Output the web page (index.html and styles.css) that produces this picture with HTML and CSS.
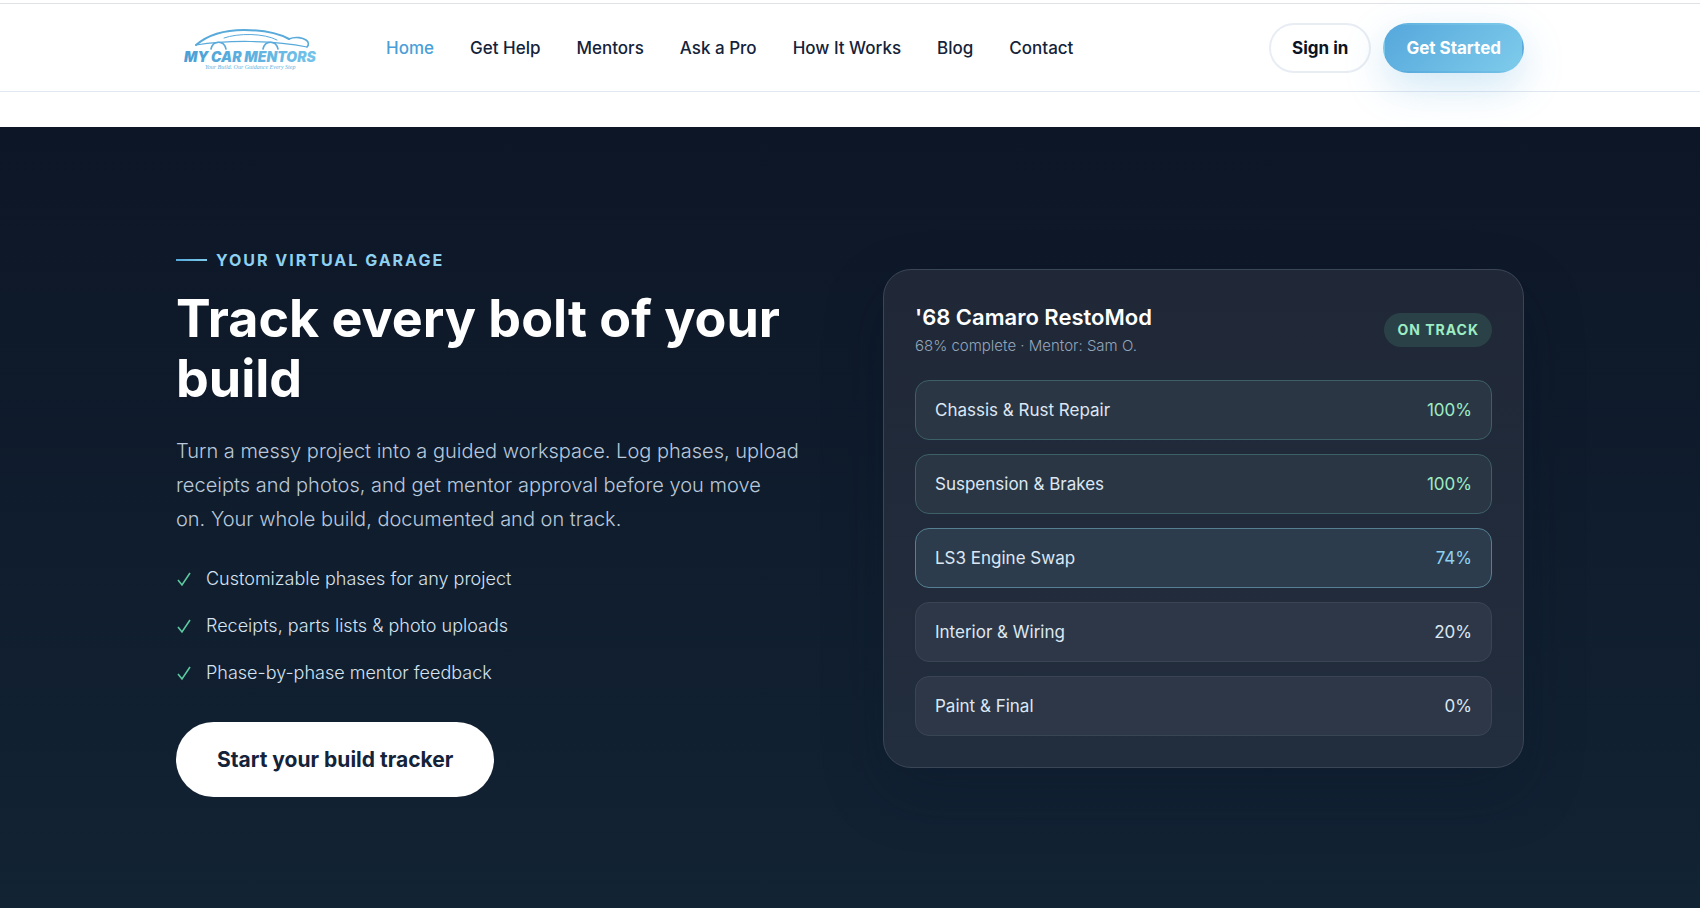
FILE: index.html
```html
<!DOCTYPE html>
<html lang="en">
<head>
    <meta charset="UTF-8">
    <meta name="viewport" content="width=device-width, initial-scale=1.0">
    <title>My Car Mentors</title>
    <link rel="stylesheet" href="styles.css">
</head>
<body>
    <header class="site-header">
        <div class="container header-inner">
            <a href="#" class="logo" aria-label="My Car Mentors">
                <svg width="152" height="56" viewBox="0 0 152 56">
                    <defs>
                        <linearGradient id="logoBlue" x1="0" y1="0" x2="1" y2="0">
                            <stop offset="0" stop-color="#4a9fd4"/>
                            <stop offset="1" stop-color="#74c3ea"/>
                        </linearGradient>
                    </defs>
                    <g fill="none" stroke="#58aadb" stroke-linecap="round" stroke-linejoin="round">
                        <path stroke-width="2" d="M20 25C34 13 52 10 68 10C86 10 102 13 113 19"/>
                        <path stroke-width="1.6" d="M113 19C120 16 127 18 130 20C133 22 133 25 131 27"/>
                        <path stroke-width="1.2" d="M20 25C50 20 98 20 131 27"/>
                        <path stroke-width="1" d="M48 18C62 13 88 13 101 20"/>
                        <path stroke-width="1.6" d="M35 29C37 20 48 20 50 29"/>
                        <path stroke-width="1.6" d="M87 29C89 20 100 20 102 29"/>
                    </g>
                    <text class="logo-name" x="8" y="42">MY CAR MENTORS</text>
                    <text class="logo-tag" x="29" y="49">Your Build. Our Guidance Every Step</text>
                </svg>
            </a>
            <nav class="main-nav">
                <a href="#" class="active">Home</a>
                <a href="#">Get Help</a>
                <a href="#">Mentors</a>
                <a href="#">Ask a Pro</a>
                <a href="#">How It Works</a>
                <a href="#">Blog</a>
                <a href="#">Contact</a>
            </nav>
            <div class="header-actions">
                <button type="button" class="btn btn-outline">Sign in</button>
                <button type="button" class="btn btn-primary">Get Started</button>
            </div>
        </div>
    </header>

    <section class="garage">
        <div class="container garage-grid">
            <div class="garage-copy">
                <p class="eyebrow">YOUR VIRTUAL GARAGE</p>
                <h1>Track every bolt of your build</h1>
                <p class="lead">Turn a messy project into a guided workspace. Log phases, upload receipts and photos, and get mentor approval before you move<br>on. Your whole build, documented and on track.</p>
                <ul class="checks">
                    <li><svg width="16" height="16" viewBox="0 0 16 16"><path d="M2 9l4 5L14 2"/></svg>Customizable phases for any project</li>
                    <li><svg width="16" height="16" viewBox="0 0 16 16"><path d="M2 9l4 5L14 2"/></svg>Receipts, parts lists &amp; photo uploads</li>
                    <li><svg width="16" height="16" viewBox="0 0 16 16"><path d="M2 9l4 5L14 2"/></svg>Phase-by-phase mentor feedback</li>
                </ul>
                <button type="button" class="btn-large">Start your build tracker</button>
            </div>

            <div class="tracker">
                <div class="tracker-head">
                    <div>
                        <h2>'68 Camaro RestoMod</h2>
                        <p>68% complete · Mentor: Sam O.</p>
                    </div>
                    <span class="badge">ON TRACK</span>
                </div>
                <ul class="phases">
                    <li class="done"><span>Chassis &amp; Rust Repair</span><span class="pct">100%</span></li>
                    <li class="done"><span>Suspension &amp; Brakes</span><span class="pct">100%</span></li>
                    <li class="current"><span>LS3 Engine Swap</span><span class="pct">74%</span></li>
                    <li><span>Interior &amp; Wiring</span><span class="pct">20%</span></li>
                    <li><span>Paint &amp; Final</span><span class="pct">0%</span></li>
                </ul>
            </div>
        </div>
    </section>
</body>
</html>
```

FILE: styles.css
```css
* {
    box-sizing: border-box;
}
body {
    margin: 0;
    padding-top: 3px;
    background: #fff;
    color: #0f1c2e;
    font-family: Inter, "Liberation Sans", sans-serif;
}
h1, h2, p, ul {
    margin: 0;
    padding: 0;
}
ul {
    list-style: none;
}
button {
    font-family: inherit;
    cursor: pointer;
}
.container {
    max-width: 1348px;
    margin: 0 auto;
}

/* Header */
.site-header {
    border-top: 1px solid #dfe3e8;
    border-bottom: 1px solid #e2e8f0;
}
.header-inner {
    display: flex;
    align-items: center;
    height: 87px;
}
.logo {
    display: flex;
    margin-right: 58px;
}
.logo-name {
    font: italic 900 14px Inter, sans-serif;
    fill: url(#logoBlue);
}
.logo-tag {
    font: italic 6px "Liberation Serif", serif;
    fill: #62b2e0;
}
.main-nav {
    display: flex;
    gap: 36px;
}
.main-nav a {
    color: #14233a;
    font-size: 17px;
    font-weight: 500;
    text-decoration: none;
}
.main-nav a.active {
    color: #4a9fd8;
}
.header-actions {
    display: flex;
    gap: 12px;
    margin-left: auto;
}
.btn {
    height: 50px;
    padding: 0 21px;
    border: 2px solid transparent;
    border-radius: 25px;
    font-size: 17px;
    font-weight: 700;
}
.btn-outline {
    border-color: #e8edf3;
    background: #fff;
    color: #0b1424;
}
.btn-primary {
    background: linear-gradient(135deg, #56a8dc, #7ecbeb);
    color: #fff;
    box-shadow: 0 14px 40px rgba(86, 168, 220, 0.28);
}

/* Virtual garage */
.garage {
    margin-top: 35px;
    padding: 112px 0 111px;
    background: linear-gradient(180deg, #0d1626, #122334);
}
.garage-grid {
    display: grid;
    grid-template-columns: 1fr 1fr;
    gap: 66px;
    align-items: center;
}
.garage-copy {
    padding-top: 7px;
}
.eyebrow {
    display: flex;
    align-items: center;
    gap: 9px;
    color: #8ed1f0;
    font-size: 16px;
    font-weight: 700;
    line-height: 28px;
    letter-spacing: 2px;
}
.eyebrow::before {
    content: "";
    width: 31px;
    height: 2px;
    background: linear-gradient(90deg, #56a8dc, #7ecbeb);
}
h1 {
    margin-top: 15px;
    color: #fff;
    font-size: 52px;
    font-weight: 700;
    line-height: 60px;
}
.lead {
    margin-top: 25px;
    color: #b9c8da;
    font-size: 20px;
    font-weight: 300;
    line-height: 34px;
}
.checks {
    display: grid;
    gap: 19px;
    margin-top: 29px;
}
.checks li {
    display: flex;
    align-items: center;
    gap: 14px;
    color: #d5e2f0;
    font-size: 18px;
    font-weight: 300;
    line-height: 28px;
}
.checks svg {
    fill: none;
    stroke: #5cc9a0;
    stroke-width: 1.6;
}
.btn-large {
    height: 75px;
    margin-top: 35px;
    padding: 0 41px;
    border: 0;
    border-radius: 38px;
    background: #fff;
    color: #14233a;
    font-size: 21px;
    font-weight: 700;
}

/* Tracker card */
.tracker {
    padding: 31px;
    border: 1px solid #3a4656;
    border-radius: 28px;
    background: linear-gradient(180deg, #202837, #222d3d);
    box-shadow: 0 24px 60px rgba(8, 20, 38, 0.25);
}
.tracker-head {
    display: flex;
    justify-content: space-between;
    align-items: center;
    margin-bottom: 21px;
}
.tracker-head h2 {
    color: #fff;
    font-size: 22px;
    font-weight: 600;
    line-height: 32px;
}
.tracker-head p {
    color: #94a5ba;
    font-size: 15px;
    font-weight: 300;
    line-height: 26px;
}
.badge {
    padding: 0 13px;
    border-radius: 17px;
    background: #2a4147;
    color: #9cecc4;
    font-size: 14px;
    font-weight: 700;
    line-height: 34px;
    letter-spacing: 1px;
}
.phases {
    display: grid;
    gap: 14px;
}
.phases li {
    display: flex;
    justify-content: space-between;
    align-items: center;
    height: 60px;
    padding: 0 19px;
    border: 1px solid #3a4554;
    border-radius: 14px;
    background: #2d3747;
    color: #dce7f3;
    font-size: 17px;
    font-weight: 400;
}
.phases .done {
    border-color: #3d5f66;
    background: #2b3645;
}
.phases .done .pct {
    color: #9cecc4;
}
.phases .current {
    border-color: #567f93;
    background: #2c3c4d;
}
.phases .current .pct {
    color: #8ed1f0;
}
```
